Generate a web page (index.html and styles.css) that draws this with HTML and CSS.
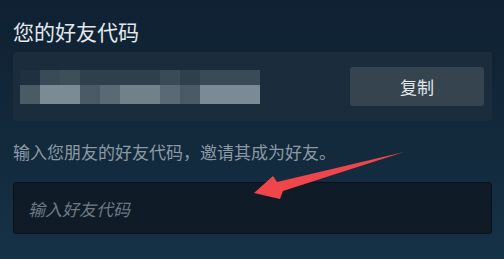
FILE: index.html
```html
<!DOCTYPE html>
<html lang="zh-CN">
<head>
    <meta charset="utf-8">
    <title>好友代码</title>
    <link rel="stylesheet" href="styles.css">
</head>
<body>
    <div class="panel">
        <h2 class="title">您的好友代码</h2>

        <div class="code-box">
            <!-- blurred friend code -->
            <div class="mosaic">
                <div class="row top">
                    <span class="c0"></span><span class="c2"></span><span class="c3"></span><span class="c1"></span>
                    <span class="c1"></span><span class="c1"></span><span class="c1"></span><span class="c2"></span>
                    <span class="c1"></span><span class="c2"></span><span class="c2"></span><span class="c2"></span>
                </div>
                <div class="row">
                    <span class="d1"></span><span class="d4"></span><span class="d4"></span><span class="d1"></span>
                    <span class="d2"></span><span class="d3"></span><span class="d3"></span><span class="d2"></span>
                    <span class="d1"></span><span class="d4"></span><span class="d4"></span><span class="d4"></span>
                </div>
            </div>
            <button class="copy-btn">复制</button>
        </div>

        <p class="hint">输入您朋友的好友代码，邀请其成为好友。</p>

        <input class="code-input" type="text" placeholder="输入好友代码">
    </div>

    <svg class="arrow" width="504" height="259" viewBox="0 0 504 259">
        <polygon points="254,193 273,176 277,182 404,152 283,191 280,199" fill="#f0454b"/>
    </svg>
</body>
</html>
```

FILE: styles.css
```css
html, body {
    margin: 0;
    height: 100%;
}

body {
    font-family: "Noto Sans CJK SC", "Noto Sans", sans-serif;
    background: linear-gradient(180deg, #0f2132 0%, #132a3d 60%, #163247 100%);
    color: #dfe5eb;
    position: relative;
    overflow: hidden;
}

.panel {
    padding: 17px 12px 0 13px;
}

.title {
    margin: 0;
    font-size: 21px;
    font-weight: normal;
    line-height: 28px;
    color: #e3e8ee;
}

.code-box {
    margin-top: 7px;
    height: 69px;
    box-sizing: border-box;
    padding: 0 8px 0 7px;
    display: flex;
    align-items: center;
    justify-content: space-between;
    background: #1b2d3c;
    border-radius: 3px;
}

.mosaic {
    display: flex;
    flex-direction: column;
}

.row {
    display: flex;
}

.row span {
    width: 20px;
    height: 19px;
}

.row.top span {
    height: 15px;
}

.c0 { background: #1f3140; }
.c1 { background: #2f3f4b; }
.c2 { background: #3a4a56; }
.c3 { background: #3f4f5a; }

.d1 { background: #4b5b66; }
.d2 { background: #5a6a74; }
.d3 { background: #718189; }
.d4 { background: #7b8b95; }

.copy-btn {
    width: 134px;
    height: 39px;
    border: none;
    border-radius: 3px;
    background: #35444f;
    color: #e2e7ec;
    font-family: inherit;
    font-size: 17px;
}

.hint {
    margin: 19px 0 0;
    font-size: 17px;
    line-height: 24px;
    color: #8c99a4;
}

.code-input {
    display: block;
    margin-top: 18px;
    width: 100%;
    height: 52px;
    box-sizing: border-box;
    padding: 0 14px;
    background: #0f1c28;
    border: 1px solid #08111a;
    border-radius: 3px;
    font-family: inherit;
    font-size: 17px;
    color: #dfe5eb;
    outline: none;
}

.code-input::placeholder {
    color: #6c7985;
    font-style: italic;
}

.arrow {
    position: absolute;
    left: 0;
    top: 0;
    pointer-events: none;
}
```
